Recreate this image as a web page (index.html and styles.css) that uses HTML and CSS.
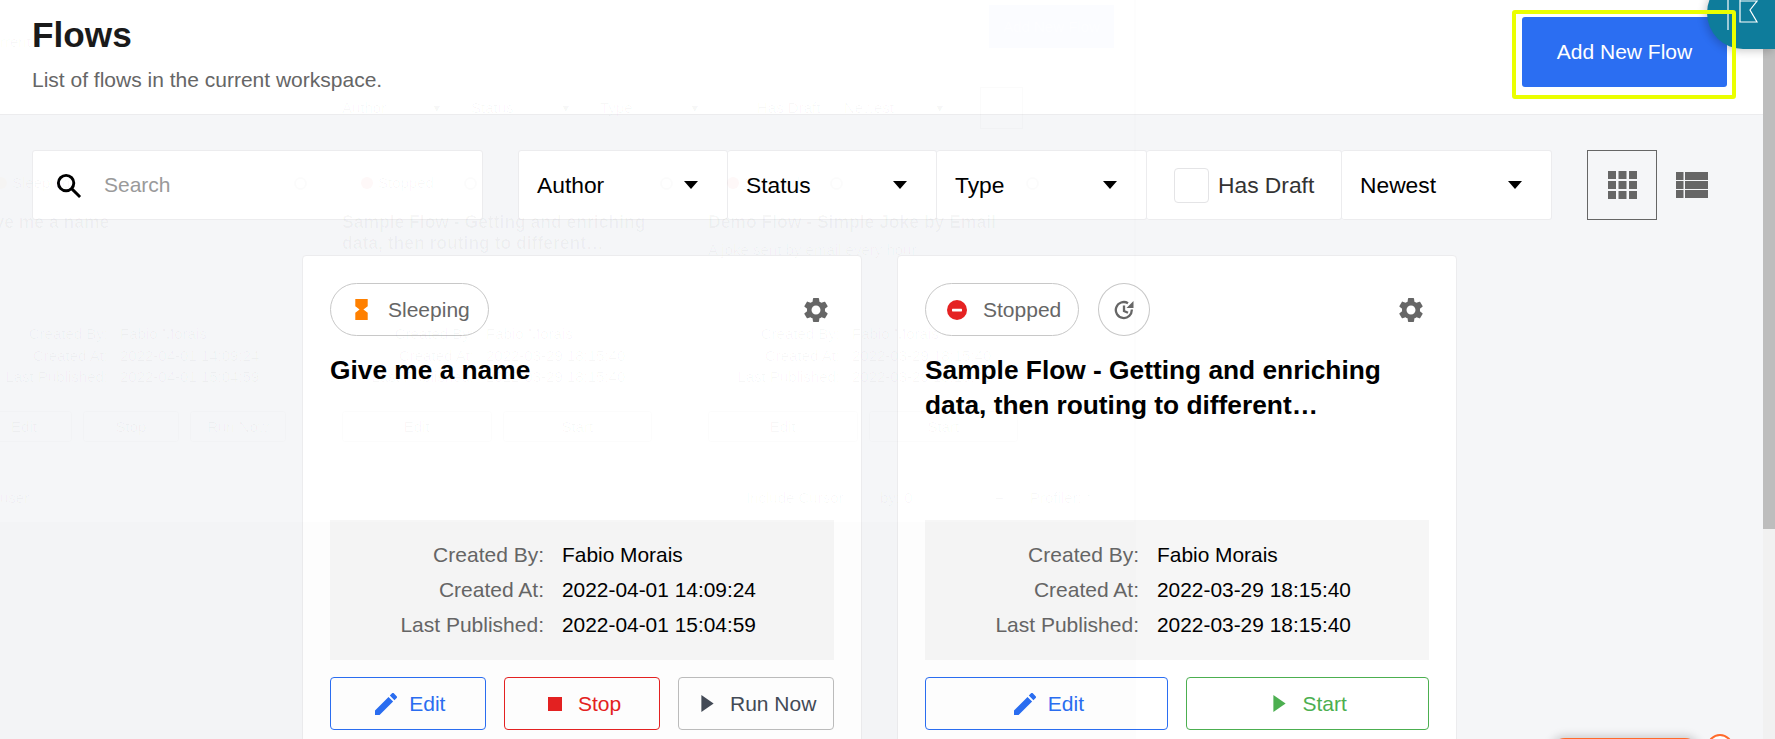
FILE: index.html
```html
<!DOCTYPE html>
<html lang="en">
<head>
<meta charset="utf-8">
<title>Flows</title>
<link rel="stylesheet" href="styles.css">
</head>
<body>
<div class="app">
  <main class="main">
    <header class="header">
      <div class="heading">
        <h1 class="title">Flows</h1>
        <p class="subtitle">List of flows in the current workspace.</p>
      </div>
      <button class="add-btn">Add New Flow</button>
    </header>

    <section class="toolbar">
      <label class="search">
        <svg class="search-icon" viewBox="0 0 28 28"><circle cx="11.5" cy="11.5" r="8" fill="none" stroke="#000" stroke-width="3"/><path d="M17.5 17.5L26 26" stroke="#000" stroke-width="3" fill="none"/></svg>
        <span class="search-text">Search</span>
      </label>
      <div class="filters">
        <div class="filter f-author"><span>Author</span><i class="caret"></i></div>
        <div class="filter f-status"><span>Status</span><i class="caret"></i></div>
        <div class="filter f-type"><span>Type</span><i class="caret"></i></div>
        <div class="filter f-draft"><i class="checkbox"></i><span class="muted">Has Draft</span></div>
        <div class="filter f-newest"><span>Newest</span><i class="caret"></i></div>
      </div>
      <div class="views">
        <div class="view-btn active">
          <svg class="grid-icon" viewBox="0 0 29 28" fill="#666"><rect x="0" y="0" width="8" height="8"/><rect x="10.500" y="0" width="8" height="8"/><rect x="21" y="0" width="8" height="8"/><rect x="0" y="10" width="8" height="8"/><rect x="10.500" y="10" width="8" height="8"/><rect x="21" y="10" width="8" height="8"/><rect x="0" y="20" width="8" height="8"/><rect x="10.500" y="20" width="8" height="8"/><rect x="21" y="20" width="8" height="8"/></svg>
        </div>
        <div class="view-btn">
          <svg class="list-icon" viewBox="0 0 32 26" fill="#666"><rect x="0" y="0" width="7.500" height="8"/><rect x="9" y="0" width="23" height="8"/><rect x="0" y="9" width="7.500" height="8"/><rect x="9" y="9" width="23" height="8"/><rect x="0" y="18" width="7.500" height="8"/><rect x="9" y="18" width="23" height="8"/></svg>
        </div>
      </div>
    </section>

    <section class="cards">
      <article class="card">
        <div class="card-top">
          <div class="pill pill-sleep">
            <svg class="status-icon hourglass" viewBox="0 0 13 22" fill="#ff8000"><path d="M0 0h13v7.500L8.500 11l4.500 3.500V22H0v-7.500L4.500 11 0 7.500z"/></svg>
            <span>Sleeping</span>
          </div>
          <svg class="gear" viewBox="0 0 24 24" fill="#666"><path d="M19.14 12.94c.04-.3.06-.61.06-.94 0-.32-.02-.64-.07-.94l2.03-1.58c.18-.14.23-.41.12-.61l-1.92-3.32c-.12-.22-.37-.29-.59-.22l-2.39.96c-.5-.38-1.03-.7-1.62-.94l-.36-2.54c-.04-.24-.24-.41-.48-.41h-3.84c-.24 0-.43.17-.47.41l-.36 2.54c-.59.24-1.13.57-1.62.94l-2.39-.96c-.22-.08-.47 0-.59.22L2.74 8.87c-.12.21-.08.47.12.61l2.03 1.58c-.05.3-.09.63-.09.94s.02.64.07.94l-2.03 1.58c-.18.14-.23.41-.12.61l1.92 3.32c.12.22.37.29.59.22l2.39-.96c.5.38 1.03.7 1.62.94l.36 2.54c.05.24.24.41.48.41h3.84c.24 0 .44-.17.47-.41l.36-2.54c.59-.24 1.13-.56 1.62-.94l2.39.96c.22.08.47 0 .59-.22l1.92-3.32c.12-.22.07-.47-.12-.61l-2.01-1.58zM12 15.6c-1.98 0-3.6-1.62-3.6-3.6s1.62-3.6 3.6-3.6 3.6 1.62 3.6 3.6-1.62 3.6-3.6 3.6z"/></svg>
        </div>
        <h2 class="card-title">Give me a name</h2>
        <dl class="info">
          <dt>Created By:</dt><dd>Fabio Morais</dd>
          <dt>Created At:</dt><dd>2022-04-01 14:09:24</dd>
          <dt>Last Published:</dt><dd>2022-04-01 15:04:59</dd>
        </dl>
        <div class="actions">
          <button class="act blue"><svg class="act-icon pencil" viewBox="3 3 18 18" fill="#2b6ef2"><path d="M3 17.25V21h3.75L17.81 9.94l-3.75-3.75L3 17.25zM20.71 7.04c.39-.39.39-1.02 0-1.41l-2.34-2.34c-.39-.39-1.02-.39-1.41 0l-1.83 1.83 3.75 3.75 1.83-1.83z"/></svg><span>Edit</span></button>
          <button class="act red"><i class="square"></i><span>Stop</span></button>
          <button class="act grey"><svg class="act-icon play" viewBox="0 0 13 18" fill="#444b57"><path d="M0 0l13 9-13 9z"/></svg><span>Run Now</span></button>
        </div>
      </article>

      <article class="card">
        <div class="card-top">
          <div class="pill pill-stop">
            <svg class="status-icon stop-dot" viewBox="0 0 20 20"><circle cx="10" cy="10" r="10" fill="#e52222"/><rect x="5" y="8.800" width="10" height="2.600" rx=".6" fill="#fff"/></svg>
            <span>Stopped</span>
          </div>
          <div class="round">
            <svg class="history" viewBox="0 0 20 20" fill="none" stroke="#666" stroke-width="2.300"><path d="M17.800 9.500A8 8 0 1 1 14 3.200"/><path d="M10 5.500V11l4 1.800"/><path d="M19.500 1v7h-7z" fill="#666" stroke="none"/></svg>
          </div>
          <svg class="gear" viewBox="0 0 24 24" fill="#666"><path d="M19.14 12.94c.04-.3.06-.61.06-.94 0-.32-.02-.64-.07-.94l2.03-1.58c.18-.14.23-.41.12-.61l-1.92-3.32c-.12-.22-.37-.29-.59-.22l-2.39.96c-.5-.38-1.03-.7-1.62-.94l-.36-2.54c-.04-.24-.24-.41-.48-.41h-3.84c-.24 0-.43.17-.47.41l-.36 2.54c-.59.24-1.13.57-1.62.94l-2.39-.96c-.22-.08-.47 0-.59.22L2.74 8.87c-.12.21-.08.47.12.61l2.03 1.58c-.05.3-.09.63-.09.94s.02.64.07.94l-2.03 1.58c-.18.14-.23.41-.12.61l1.92 3.32c.12.22.37.29.59.22l2.39-.96c.5.38 1.03.7 1.62.94l.36 2.54c.05.24.24.41.48.41h3.84c.24 0 .44-.17.47-.41l.36-2.54c.59-.24 1.13-.56 1.62-.94l2.39.96c.22.08.47 0 .59-.22l1.92-3.32c.12-.22.07-.47-.12-.61l-2.01-1.58zM12 15.6c-1.98 0-3.6-1.62-3.6-3.6s1.62-3.6 3.6-3.6 3.6 1.62 3.6 3.6-1.62 3.6-3.6 3.6z"/></svg>
        </div>
        <h2 class="card-title">Sample Flow - Getting and enriching data, then routing to different…</h2>
        <dl class="info">
          <dt>Created By:</dt><dd>Fabio Morais</dd>
          <dt>Created At:</dt><dd>2022-03-29 18:15:40</dd>
          <dt>Last Published:</dt><dd>2022-03-29 18:15:40</dd>
        </dl>
        <div class="actions">
          <button class="act blue"><svg class="act-icon pencil" viewBox="3 3 18 18" fill="#2b6ef2"><path d="M3 17.25V21h3.75L17.81 9.94l-3.75-3.75L3 17.25zM20.71 7.04c.39-.39.39-1.02 0-1.41l-2.34-2.34c-.39-.39-1.02-.39-1.41 0l-1.83 1.83 3.75 3.75 1.83-1.83z"/></svg><span>Edit</span></button>
          <button class="act green"><svg class="act-icon play" viewBox="0 0 13 18" fill="#4caf50"><path d="M0 0l13 9-13 9z"/></svg><span>Start</span></button>
        </div>
      </article>
    </section>
  </main>

  <aside class="scrollbar"><div class="thumb"></div></aside>
</div>

<div class="highlight"></div>
<div class="tour-badge">
  <svg class="flag" viewBox="0 0 68 72" fill="none" stroke="#fff" stroke-width="1.200"><path d="M21 0V53"/><path d="M33 0V45H50L43 33L50 24H33"/></svg>
</div>
<div class="chat-pill"></div>
<div class="chat-ring"></div>

<!-- faint page showing through from behind the overlay -->
<div class="ghost" aria-hidden="true">
  <div class="g-foot"></div>
  <div class="g-line"></div>
  <div class="g-add"><span>Add New Flow</span></div>
  <div class="g-subtitle">rrent</div>
  <div class="g-filters">
    <span class="g-f">Author</span><span class="g-c">▾</span>
    <span class="g-f">Status</span><span class="g-c">▾</span>
    <span class="g-f">Type</span><span class="g-c">▾</span>
    <span class="g-f g-draft">Has Draft</span>
    <span class="g-f g-newest">Newest</span><span class="g-c">▾</span>
    <span class="g-view"></span>
  </div>
  <div class="g-cards">
    <div class="g-card">
      <div class="g-top"><i class="g-dot g-amber"></i><span>Sleeping</span><i class="g-ring g-gear"></i></div>
      <div class="g-title">Give me a name</div>
      <div class="g-info"><span>Created By:</span><span>Fabio Morais</span><span>Created At:</span><span>2022-04-01 14:09:24</span><span>Last Published:</span><span>2022-04-01 15:04:59</span></div>
      <div class="g-actions"><span>Edit</span><span>Stop</span><span>Run Now</span></div>
    </div>
    <div class="g-card">
      <div class="g-top"><i class="g-dot"></i><span>Stopped</span><i class="g-ring g-hist"></i><i class="g-ring g-gear"></i></div>
      <div class="g-title">Sample Flow - Getting and enriching<br>data, then routing to different…</div>
      <div class="g-info"><span>Created By:</span><span>Fabio Morais</span><span>Created At:</span><span>2022-03-29 18:15:40</span><span>Last Published:</span><span>2022-03-29 18:15:40</span></div>
      <div class="g-actions"><span>Edit</span><span>Start</span></div>
    </div>
    <div class="g-card">
      <div class="g-top"><i class="g-dot"></i><span>Stopped</span><i class="g-ring g-hist"></i><i class="g-ring g-gear"></i></div>
      <div class="g-title g-title-one">Demo Flow - Simple Joke by Email</div>
      <div class="g-desc">A joke sent by email every hour</div>
      <div class="g-info"><span>Created By:</span><span>Fabio Morais</span><span>Created At:</span><span>2022-03-29 18:15:40</span><span>Last Published:</span><span>2022-03-29 18:15:40</span></div>
      <div class="g-actions"><span>Edit</span><span>Start</span></div>
    </div>
  </div>
  <div class="g-bottom"><span class="g-user">user</span><span class="g-incl">Include Cursor</span><span class="g-by">by: 0</span><span class="g-plus">+</span><span>Profiler: *</span></div>
</div>
</body>
</html>
```
FILE: styles.css
```css
* { box-sizing: border-box; }
html, body { margin: 0; height: 739px; overflow: hidden; }
body { font-family: "Liberation Sans", Arial, sans-serif; background: #f5f6f8; color: #000; position: relative; }

.app { display: flex; height: 739px; }
.main { flex: 1; min-width: 0; overflow: hidden; }

.header { height: 115px; background: #fff; border-bottom: 1px solid #ececee; display: flex; justify-content: space-between; align-items: flex-start; padding: 17px 36px 0 32px; }
.title { margin: 0; font-size: 35.200px; line-height: 36px; font-weight: 700; color: #1a1a1a; }
.subtitle { margin: 15px 0 0; font-size: 21px; line-height: 24px; color: #666; }
.add-btn { width: 205px; height: 70px; border: 0; border-radius: 3px; background: #2b6ef2; color: #fff; font: 21px "Liberation Sans", Arial, sans-serif; }

.toolbar { display: flex; align-items: stretch; padding: 35px 0 0 32px; height: 105px; }
.search { width: 451px; height: 70px; background: #fff; border: 1px solid #ececee; border-radius: 3px; display: flex; align-items: center; padding-left: 22px; }
.search-icon { width: 27px; height: 27px; }
.search-text { margin-left: 22px; font-size: 21px; color: #9a9a9a; }

.filters { display: flex; margin-left: 35px; height: 70px; }
.filter { background: #fff; border: 1px solid #ececee; border-left-width: 0; border-radius: 3px; display: flex; align-items: center; justify-content: space-between; font-size: 22.800px; padding: 0 29px 0 18px; white-space: nowrap; }
.f-author { width: 210px; border-left-width: 1px; padding-left: 18px; }
.f-status { width: 209px; }
.f-type { width: 210px; }
.f-draft { width: 195px; justify-content: flex-start; padding: 0 0 0 27px; }
.f-newest { width: 210px; }
.caret { width: 0; height: 0; border-left: 7.500px solid transparent; border-right: 7.500px solid transparent; border-top: 8px solid #000; }
.checkbox { flex: none; width: 35px; height: 35px; border: 1px solid #e4e4e6; border-radius: 4px; background: #fff; margin-right: 9px; }
.muted { color: #333; }

.views { display: flex; margin-left: 35px; height: 70px; }
.view-btn { height: 70px; display: flex; align-items: center; justify-content: center; }
.view-btn.active { width: 70px; border: 1px solid #666; }
.grid-icon { width: 29px; height: 28px; }
.list-icon { width: 32px; height: 26px; margin-left: 19px; }

.cards { display: flex; gap: 35px; padding: 35px 0 0 302px; }
.card { width: 560px; height: 560px; background: #fff; border: 1px solid #ececee; border-radius: 4px; padding: 27px 27px 0; flex: none; }
.card-top { display: flex; align-items: center; gap: 19px; height: 53px; }
.pill { height: 53px; border: 1px solid #c8c8c8; border-radius: 27px; display: flex; align-items: center; font-size: 21px; color: #666; }
.pill-sleep { padding: 0 18px 0 24px; }
.pill-stop { padding: 0 17px 0 21px; }
.status-icon { flex: none; }
.hourglass { width: 13px; height: 21px; margin-right: 20px; }
.stop-dot { width: 20px; height: 20px; margin-right: 16px; }
.round { width: 52px; height: 53px; border: 1px solid #c8c8c8; border-radius: 50%; display: flex; align-items: center; justify-content: center; }
.history { width: 20px; height: 20px; }
.gear { width: 30px; height: 30px; margin-left: auto; margin-right: 3px; }
.card-title { margin: 17px 0 0; font-size: 26.300px; line-height: 35px; font-weight: 700; height: 167px; }

.info { margin: 0; background: #f6f6f6; height: 140px; padding: 17px 0; display: grid; grid-template-columns: 214px 1fr; column-gap: 18px; grid-auto-rows: 35px; font-size: 20.900px; align-items: center; }
.info dt { color: #666; text-align: right; font-size: 21px; }
.info dd { margin: 0; color: #000; }

.actions { display: flex; gap: 18.500px; margin-top: 17px; }
.act { flex: 1 1 0; min-width: 0; height: 53px; background: #fff; border: 1px solid; border-radius: 4px; padding: 0 0 0 5px; display: flex; align-items: center; justify-content: center; font: 21px "Liberation Sans", Arial, sans-serif; }
.blue { border-color: #2b6ef2; color: #2b6ef2; }
.red { border-color: #e52222; color: #e52222; }
.grey { border-color: #bdbdbd; color: #444b57; }
.green { border-color: #4caf50; color: #4caf50; }
.act-icon { flex: none; }
.pencil { width: 22px; height: 22px; margin-right: 12px; }
.play { width: 13px; height: 17px; margin-right: 16px; }
.square { width: 14px; height: 14px; background: #e52222; margin-right: 16px; }

.scrollbar { width: 12px; background: #f1f1f1; flex: none; }
.thumb { height: 529px; background: #bdbdbd; }

.highlight { position: absolute; left: 1512px; top: 10px; width: 224px; height: 89px; border: 4px solid #eaff00; border-radius: 3px; z-index: 3; }
.tour-badge { position: absolute; left: 1707px; top: -23px; width: 68px; height: 72px; background: #0e7c9b; border-radius: 36px 0 0 36px; z-index: 2; overflow: hidden; box-shadow: -2px 2px 8px rgba(0,0,0,.2); }
.flag { display: block; width: 68px; height: 72px; }
.chat-pill { position: absolute; left: 1550px; top: 738px; width: 150px; height: 30px; background: #ff6a2b; border-radius: 15px; box-shadow: 0 -2px 10px rgba(0,0,0,.18); z-index: 2; }
.chat-ring { position: absolute; left: 1707px; top: 734px; width: 26px; height: 26px; border: 2.500px solid #ff6a2b; border-radius: 50%; background: #fff; z-index: 2; }

/* faint page behind the overlay */
.ghost { position: absolute; left: 0; top: 0; width: 1763px; height: 739px; pointer-events: none; z-index: 1; overflow: hidden; color: rgba(0,0,0,.03); font-size: 15px; line-height: 18px; white-space: nowrap; }
.g-foot { position: absolute; left: 0; top: 522px; width: 1136px; height: 217px; background: rgba(0,0,0,.008); }
.g-line { position: absolute; left: 1134px; top: 0; width: 2px; height: 522px; background: rgba(0,0,0,.006); }
.g-add { position: absolute; left: 989px; top: 5px; width: 125px; height: 43px; background: rgba(43,110,242,.02); display: flex; align-items: center; justify-content: center; color: rgba(255,255,255,.5); }
.g-subtitle { position: absolute; left: 0; top: 33px; }
.g-filters { position: absolute; left: 342px; top: 99px; display: flex; align-items: flex-start; }
.g-f { width: 91px; }
.g-c { width: 38px; }
.g-draft { width: 87px; margin-left: 28px; }
.g-newest { width: 92px; }
.g-view { width: 43px; height: 42px; border: 1px solid rgba(0,0,0,.015); margin: -12px 0 0 6px; }
.g-cards { position: absolute; left: -24px; top: 174px; display: grid; grid-template-columns: repeat(3, 366px); }
.g-top { display: flex; align-items: center; height: 18px; padding-left: 19px; width: 331px; }
.g-dot { width: 12px; height: 12px; border-radius: 50%; background: rgba(229,34,34,.03); margin-right: 5px; }
.g-amber { background: rgba(255,128,0,.02); }
.g-ring { width: 13px; height: 13px; border-radius: 50%; border: 2px solid rgba(0,0,0,.015); }
.g-hist { margin-left: 30px; }
.g-gear { margin-left: auto; }
.g-title { margin-top: 20px; height: 113px; font-size: 17.500px; line-height: 21px; font-weight: 700; }
.g-title-one { height: 29px; }
.g-desc { height: 84px; }
.g-info { display: grid; grid-template-columns: 132px 1fr; column-gap: 12px; grid-auto-rows: 21.500px; height: 86px; width: 340px; }
.g-info span:nth-child(odd) { text-align: right; }
.g-actions { display: flex; gap: 11px; width: 310px; }
.g-actions span { flex: 1 1 0; height: 31px; border: 1px solid rgba(0,0,0,.012); border-radius: 3px; display: flex; align-items: center; justify-content: center; }
.g-bottom { position: absolute; left: 0; top: 489px; display: flex; }
.g-user { width: 746px; }
.g-incl { width: 134px; }
.g-by { width: 115px; }
.g-plus { width: 35px; }
```
